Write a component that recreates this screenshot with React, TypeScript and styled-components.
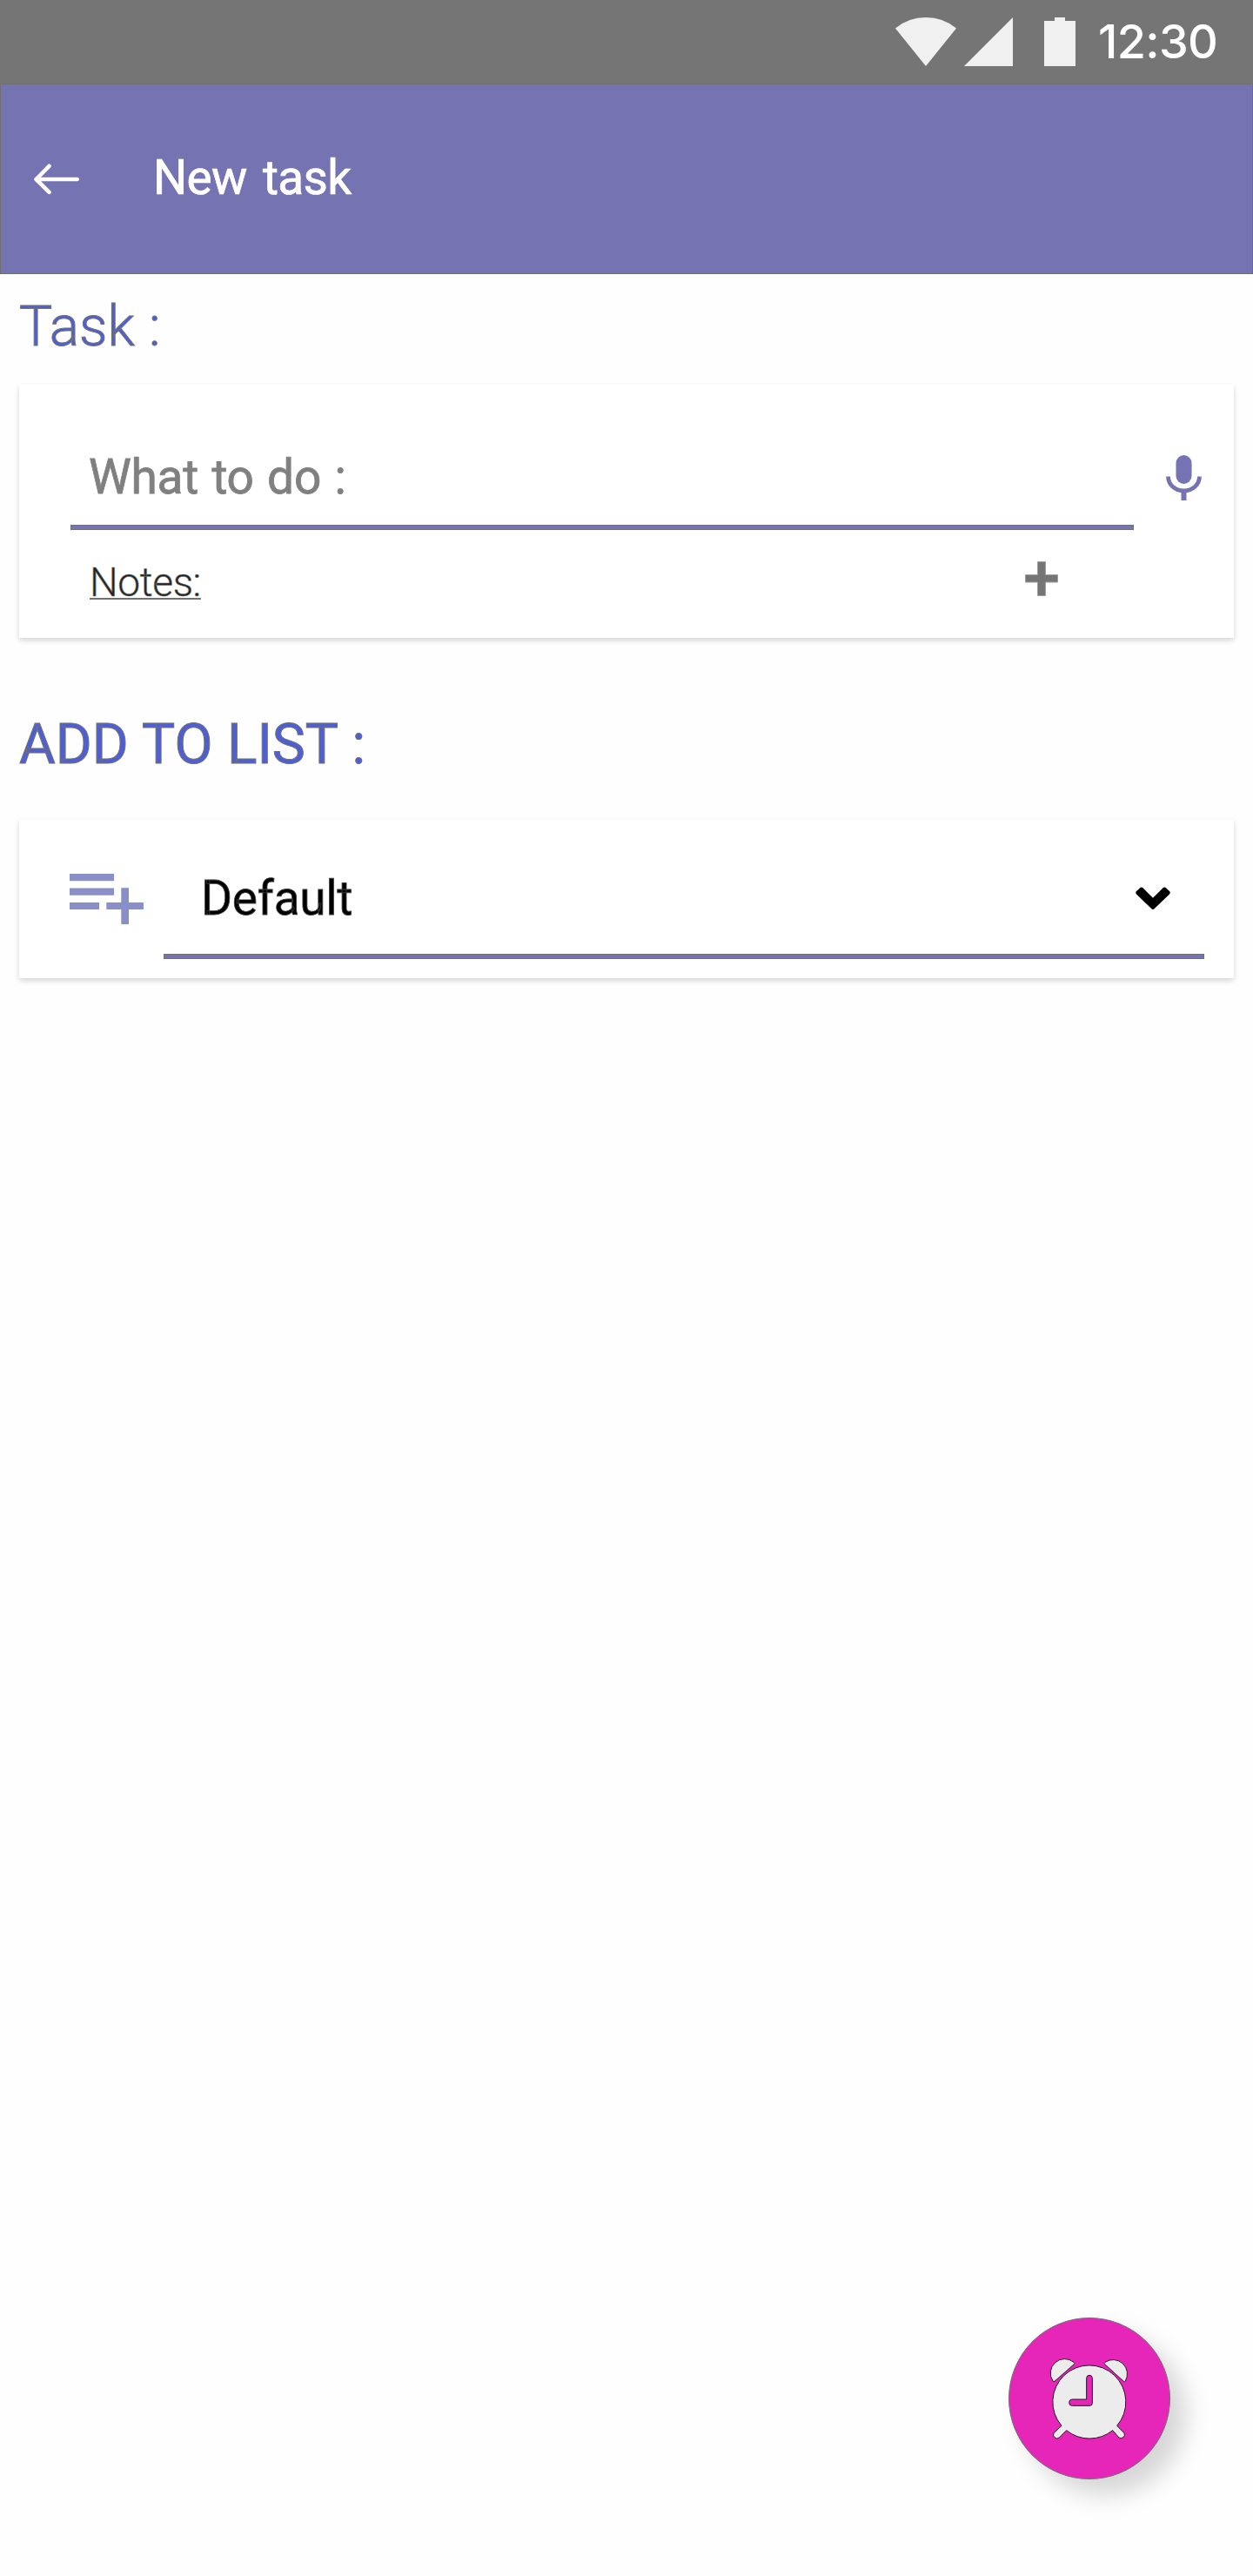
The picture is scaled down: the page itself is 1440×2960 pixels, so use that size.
import React from "react";
import styled, { createGlobalStyle } from "styled-components";

const GlobalStyle = createGlobalStyle`
  * { box-sizing: border-box; }
  body { margin: 0; background: #fefefe; font-family: Roboto, "Liberation Sans", sans-serif; }
  svg { display: block; flex: none; }
`;

const Screen = styled.div`
  width: 1440px;
  height: 2960px;
  display: flex;
  flex-direction: column;
  background: #fefefe;
  overflow: hidden;
`;

const StatusBar = styled.div`
  height: 96px;
  flex: none;
  display: flex;
  align-items: center;
  padding-left: 1029px;
  background: #757575;
`;

const StatusIcon = styled.svg<{ $gap: number }>`
  margin-right: ${(p) => p.$gap}px;
  fill: #f0f0f0;
`;

const Clock = styled.time`
  font-family: Inter, sans-serif;
  font-size: 54px;
  font-weight: 500;
  line-height: 96px;
  letter-spacing: -0.7px;
  font-feature-settings: "calt" 0;
  color: #fff;
  white-space: nowrap;
`;

const AppBar = styled.header`
  height: 219px;
  flex: none;
  display: flex;
  align-items: center;
  padding-left: 37px;
  background: #7673b3;
  border: 1px solid #707070;
`;

const Title = styled.h1`
  margin: 0 0 3px 83px;
  font-size: 55px;
  font-weight: 400;
  line-height: 64px;
  letter-spacing: -0.7px;
  word-spacing: 5.5px;
  color: #fff;
  -webkit-text-stroke: 0.7px #fff;
`;

const SectionTitle = styled.h2<{ $weight: number; $top: number; $bottom: number }>`
  margin: ${(p) => p.$top}px 0 ${(p) => p.$bottom}px 22px;
  flex: none;
  font-size: 64px;
  font-weight: ${(p) => p.$weight};
  line-height: 76px;
  word-spacing: 0.7px;
  color: #4d5fd3;
  -webkit-text-stroke: 1px #707070;
`;

const Card = styled.section<{ $height: number }>`
  width: 1396px;
  height: ${(p) => p.$height}px;
  flex: none;
  margin-left: 22px;
  background: #fff;
  box-shadow: 0 3px 6px rgba(0, 0, 0, 0.16);
`;

const TaskRow = styled.div`
  display: flex;
  padding: 51px 0 0 59px;
`;

const Field = styled.div<{ $width: number; $height: number }>`
  width: ${(p) => p.$width}px;
  height: ${(p) => p.$height}px;
  display: flex;
  flex-direction: column;
`;

const FieldBody = styled.div<{ $left: number; $right?: number }>`
  flex: 1;
  display: flex;
  align-items: center;
  justify-content: space-between;
  padding: 0 ${(p) => p.$right ?? 0}px 0 ${(p) => p.$left}px;
`;

const FieldText = styled.span`
  font-size: 55px;
  line-height: 64px;
  letter-spacing: -0.25px;
`;

const Placeholder = styled(FieldText)`
  word-spacing: 2px;
  color: #808080;
  -webkit-text-stroke: 0.8px #808080;
`;

const SelectedValue = styled(FieldText)`
  color: #000;
  -webkit-text-stroke: 0.8px #404040;
`;

const Underline = styled.hr`
  width: 100%;
  height: 6px;
  margin: 0;
  background: #7673b3;
  border: 1px solid #707070;
`;

const MicIcon = styled.svg`
  margin: 30px 0 0 37px;
`;

const NotesRow = styled.div`
  height: 120px;
  display: flex;
  align-items: center;
  justify-content: space-between;
  padding: 0 202px 0 81px;
`;

const Notes = styled.span`
  font-size: 46px;
  font-weight: 300;
  line-height: 54px;
  letter-spacing: -0.35px;
  color: #222;
  text-decoration: underline;
  text-decoration-color: #707070;
  text-decoration-thickness: 2px;
  text-underline-offset: 2px;
  text-decoration-skip-ink: none;
  -webkit-text-stroke: 0.6px #707070;
`;

const PlusIcon = styled.svg`
  margin-bottom: 8px;
`;

const ListRow = styled.div`
  display: flex;
  align-items: flex-start;
  padding: 26px 0 0 58px;
`;

const ListIcon = styled.svg`
  margin: 36px 23px 0 0;
  fill: #8990c8;
`;

const Fab = styled.button`
  width: 186px;
  height: 186px;
  flex: none;
  margin: auto 95px 111px auto;
  padding: 0;
  display: flex;
  align-items: center;
  justify-content: center;
  border: 1px solid #707070;
  border-radius: 50%;
  background: #e626b9;
  box-shadow: 18px 18px 28px rgba(0, 0, 0, 0.16);
`;

export default function App() {
  return (
    <>
      <GlobalStyle />
      <Screen>
        <StatusBar>
          <StatusIcon $gap={9} width="70" height="56" viewBox="0 0 70 56">
            <path d="M0 12.5Q15 0 35 0T70 12.5L35 56Z" />
          </StatusIcon>
          <StatusIcon $gap={36} width="56" height="56" viewBox="0 0 56 56">
            <path d="M0 56L56 0V56Z" />
          </StatusIcon>
          <StatusIcon $gap={26} width="36" height="56" viewBox="0 0 36 56">
            <path d="M12 0H24V4H36V56H0V4H12Z" />
          </StatusIcon>
          <Clock>12:30</Clock>
        </StatusBar>

        <AppBar>
          <svg width="55" height="36" viewBox="0 0 55 36" fill="none" stroke="#fff" strokeWidth="4.6" strokeLinecap="round" strokeLinejoin="round">
            <path d="M18.5 2.8L3.5 18L18.5 32.8M3.5 18H50.7" />
          </svg>
          <Title>New task</Title>
        </AppBar>

        <main>
          <SectionTitle $weight={300} $top={23} $bottom={28}>Task :</SectionTitle>
          <Card $height={291}>
            <TaskRow>
              <Field $width={1222} $height={116}>
                <FieldBody $left={21}>
                  <Placeholder>What to do :</Placeholder>
                </FieldBody>
                <Underline />
              </Field>
              <MicIcon width="41" height="52" viewBox="0 0 41 52">
                <rect x="11.5" y="0" width="18" height="33" rx="9" fill="#7673b3" />
                <path d="M2.5 24.5C2.5 34 10.5 41 20.5 41S38.5 34 38.5 24.5" fill="none" stroke="#7673b3" strokeWidth="4.8" />
                <path d="M17.5 41H23.5V52H17.5Z" fill="#7673b3" />
              </MicIcon>
            </TaskRow>
            <NotesRow>
              <Notes>Notes:</Notes>
              <PlusIcon width="38" height="40" viewBox="0 0 38 40">
                <path d="M14.5.5H23.5V15.5H37.5V24H23.5V39.5H14.5V24H.5V15.5H14.5Z" fill="#757575" stroke="#a0a0a0" />
              </PlusIcon>
            </NotesRow>
          </Card>

          <SectionTitle $weight={400} $top={85} $bottom={48}>ADD TO LIST :</SectionTitle>
          <Card $height={182}>
            <ListRow>
              <ListIcon width="85" height="58" viewBox="0 0 85 58">
                <path d="M0 0H51V8.3H0ZM0 16.5H51V24.8H0ZM0 33H34V41H0ZM42.3 33H59.3V16.3H68V33H85V41H68V58H59.3V41H42.3Z" />
              </ListIcon>
              <Field $width={1196} $height={134}>
                <FieldBody $left={43} $right={39}>
                  <SelectedValue>Default</SelectedValue>
                  <svg width="40" height="26" viewBox="0 0 40 26">
                    <path d="M3.5 3L5 1.2Q6.7-.4 8.4 1.2L20 12.8L31.6 1.2Q33.3-.4 35 1.2L39 5.1Q40.5 6.8 39 8.5L21.8 25Q20 26.8 18.2 25L1 8.5Q-.5 6.8 1 5.1Z" />
                  </svg>
                </FieldBody>
                <Underline />
              </Field>
            </ListRow>
          </Card>
        </main>

        <Fab aria-label="Set alarm">
          <svg width="94" height="95" viewBox="225 235 282 285" stroke="#2a1225" strokeWidth="3" strokeLinejoin="round">
            <g fill="#ececec">
              <path d="M246 317Q243 320 240 316A49 49 0 0 1 312 251Q317 255 313 258Z" />
              <path d="M484 317Q487 320 490 316A49 49 0 0 0 420 251Q415 255 419 258Z" />
              <path d="M270 470A126 126 0 1 1 461 470L486 495A12.5 12.5 0 0 1 468 511L446 486A126 126 0 0 1 287 486L262 511A12.5 12.5 0 0 1 244 494Z" />
            </g>
            <path d="M356 379V306A10 10 0 0 1 376 306V392Q376 401 367 401H307A11 11 0 0 1 307 379Z" fill="#e626b9" />
          </svg>
        </Fab>
      </Screen>
    </>
  );
}
